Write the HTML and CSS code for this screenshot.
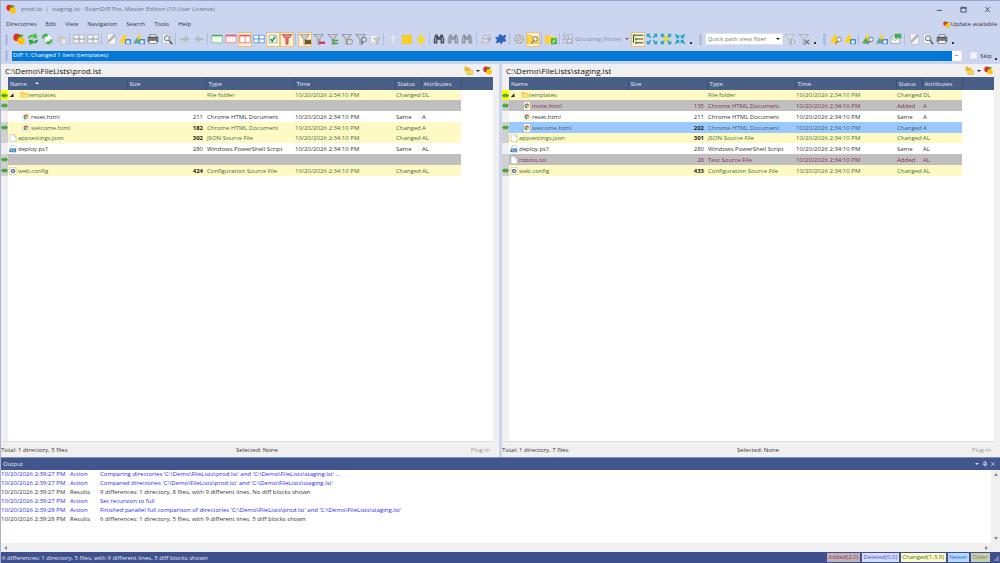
FILE: index.html
```
<!DOCTYPE html>
<html lang="en">
<head>
  <meta charset="UTF-8">
  <title>prod.lst | staging.lst - ExamDiff Pro</title>
  <link rel="stylesheet" href="styles.css">
</head>
<body>

<!-- Icon set, all on a 16x16 grid -->
<svg class="icon-defs" aria-hidden="true">
  <symbol id="apple" viewBox="0 0 16 16"><circle cx="5.5" cy="6" r="5" fill="#e8301a"/><circle cx="10.8" cy="10.2" r="5" fill="#ffc40c"/><path d="M6 5q4-5 8-2q-3 4-8 2" fill="#35a02c"/><path d="M3 1l2 2" stroke="#444"/></symbol>
  <symbol id="refresh" viewBox="0 0 16 16"><path d="M1 7q1-6 8-5l3-2 2 7H7l2-2q-3-1-5 2z" fill="#4cbe52"/><path d="M15 9q-1 6-8 5l-3 2-2-7h7l-2 2q3 1 5-2z" fill="#35a63f"/></symbol>
  <symbol id="recompare" viewBox="0 0 16 16"><path d="M5 2h6l4 4v8H5z" fill="#fff" stroke="#a6b4c4"/><path d="M1 7q0-5 5-6v-1l4 3-4 3V5Q3 5 4 8z" fill="#46b94c"/><path d="M15 9q0 5-5 6v1l-4-3 4-3v1q3 0 2-3z" fill="#46b94c"/></symbol>
  <symbol id="paste" viewBox="0 0 16 16"><path d="M2 2h5l1 2h5v8H2z" fill="#c9ccd4"/><path d="M8 7h5l2 2v6H8z" fill="#e9eaee" stroke="#b0b3bc"/></symbol>
  <symbol id="panes" viewBox="0 0 16 16"><path d="M1 2.500h14v11H1z" fill="#f3f4f8" stroke="#a4a7b0"/><path d="M8 3v10" stroke="#a4a7b0" stroke-width="1.500"/><path d="M1 8h14" stroke="#8a8d96" stroke-width="1.200"/></symbol>
  <symbol id="edit" viewBox="0 0 16 16"><path d="M3 1h9l2 2v12H3z" fill="#f6f7fa" stroke="#b9beca"/><path d="M4 13l1-4 7-7 2 2-7 7z" fill="#bbb" stroke="#8a8a8a" stroke-width=".6"/></symbol>
  <symbol id="tri-disk" viewBox="0 0 16 16"><path d="M0 13L7 1l7 12z" fill="#ffd21c"/><path d="M8 8h8v7H8z" fill="#4a8fd4"/><path d="M10 10h4v4h-4z" fill="#fff"/></symbol>
  <symbol id="tri-disk2" viewBox="0 0 16 16"><path d="M2 13L8 1l6 12z" fill="#ffd21c"/><path d="M0 14L5 6l5 8z" fill="#58a6a0"/><path d="M8 8h8v7H8z" fill="#4a8fd4"/><path d="M10 10h4v4h-4z" fill="#fff"/></symbol>
  <symbol id="tri-find" viewBox="0 0 16 16"><path d="M0 13L7 1l7 12z" fill="#ffd21c"/><circle cx="12" cy="8.500" r="3" fill="#e9f3ff" stroke="#888" stroke-width="1.200"/><path d="M10 11l-3 4" stroke="#b07020" stroke-width="1.600"/></symbol>
  <symbol id="tri-find2" viewBox="0 0 16 16"><path d="M1 13L8 1l6 12z" fill="#ffd21c"/><path d="M0 14L5 6l5 8z" fill="#58a66a"/><circle cx="12" cy="8.500" r="3" fill="#e9f3ff" stroke="#4a78b8" stroke-width="1.200"/><path d="M10 11l-3 4" stroke="#4a78b8" stroke-width="1.600"/></symbol>
  <symbol id="printer" viewBox="0 0 16 16"><path d="M4 2h8v4H4z" fill="#e5e7ec" stroke="#777"/><path d="M1 5h14v7H1z" fill="#5a5a5e"/><path d="M1 8h14" stroke="#a8a8ac"/><path d="M3 10h10v4H3z" fill="#f6f6f6" stroke="#777"/></symbol>
  <symbol id="preview" viewBox="0 0 16 16"><path d="M2 1h10v13H2z" fill="#f5f7fb" stroke="#b6bcc8"/><circle cx="8" cy="7" r="3.500" fill="#dcecff" stroke="#666" stroke-width="1.200"/><path d="M11 10l4 5" stroke="#555" stroke-width="1.800"/></symbol>
  <symbol id="right" viewBox="0 0 16 16"><path d="M2 6.500h6V3l6 5-6 5V9.500H2z" fill="#b5b8c2"/></symbol>
  <symbol id="left" viewBox="0 0 16 16"><path d="M14 6.500H8V3L2 8l6 5V9.500h6z" fill="#b5b8c2"/></symbol>
  <symbol id="pane-green" viewBox="0 0 16 16"><path d="M1 3h14v10H1z" fill="#f1fff1" stroke="#67bd7a"/><path d="M1 3.500h14" stroke="#45b060" stroke-width="2"/></symbol>
  <symbol id="pane-red" viewBox="0 0 16 16"><path d="M1 3h14v10H1z" fill="#fff4f2" stroke="#dd7772"/><path d="M1 3.500h14" stroke="#dd5b55" stroke-width="2"/></symbol>
  <symbol id="pane-split" viewBox="0 0 16 16"><path d="M1 3h14v10H1zM8 3v10" fill="#fff" stroke="#dd6660"/><path d="M1 3.500h14" stroke="#dd5b55" stroke-width="2"/></symbol>
  <symbol id="pane-blue" viewBox="0 0 16 16"><path d="M1 3h14v10H1z" fill="#fff" stroke="#4994dc"/><path d="M1 8h14M8 3v10" stroke="#4994dc" stroke-width="1.600"/></symbol>
  <symbol id="check" viewBox="0 0 16 16"><path d="M3 3h10v10H3z" fill="#fff" stroke="#7c98bc"/><path d="M5 8l2 3 4-6" fill="none" stroke="#159c2c" stroke-width="2"/></symbol>
  <symbol id="funnel" viewBox="0 0 16 16"><path d="M1 2h13L9 8v7H6.500V8z" fill="#b4b8be" stroke="#7d8188" stroke-width=".8"/><path d="M4 3.500h7M6 6h3" stroke="#eceef0"/></symbol>
  <symbol id="funnel-red" viewBox="0 0 16 16"><path d="M1 2h14L9.500 8v7h-3V8z" fill="#e0685c" stroke="#b34a44" stroke-width=".8"/><path d="M5 4h6" stroke="#ffd2c8"/></symbol>
  <symbol id="funnel-dir" viewBox="0 0 16 16"><use href="#funnel"/><path d="M8 9h8v6H8z" fill="#75591a"/></symbol>
  <symbol id="funnel-minus" viewBox="0 0 16 16"><use href="#funnel"/><path d="M8 13h8" stroke="#e12d3e" stroke-width="3"/></symbol>
  <symbol id="funnel-tree" viewBox="0 0 16 16"><use href="#funnel"/><path d="M9 8v6h6M9 10h6" stroke="#37a743" stroke-width="2" fill="none"/></symbol>
  <symbol id="funnel-clock" viewBox="0 0 16 16"><use href="#funnel"/><circle cx="12" cy="11.500" r="3.400" fill="#fff" stroke="#666"/><path d="M12 9.500v2h2" stroke="#666" fill="none"/></symbol>
  <symbol id="funnel-find" viewBox="0 0 16 16"><use href="#funnel"/><circle cx="12" cy="9" r="3" fill="#dcecff" stroke="#666" stroke-width="1.300"/><path d="M10 11v4" stroke="#666" stroke-width="1.400"/></symbol>
  <symbol id="funnel-page" viewBox="0 0 16 16"><path d="M2 3h9v10H2z" fill="#f0f0f3" stroke="#c4c5cc"/><path d="M6 7h9l-3 4v4h-2v-4z" fill="#c8c9d0" stroke="#a9abb4"/></symbol>
  <symbol id="funnel-off" viewBox="0 0 16 16"><path d="M1 2h13L9 8v7H6.500V8z" fill="#ced1da" stroke="#999ca5" stroke-width=".8"/><path d="M9 9l6 6M15 9l-6 6" stroke="#777" stroke-width="1.500"/></symbol>
  <symbol id="funnel-grey" viewBox="0 0 16 16"><path d="M1 2h13L9 8v7H6.500V8z" fill="#d9dbe1" stroke="#a4a7ae" stroke-width=".8"/><path d="M10 8l5 4-5 3z" fill="#eee" stroke="#999"/></symbol>
  <symbol id="up" viewBox="0 0 16 16"><path d="M8 2l5 6H9.500v6h-3V8H3z" fill="#e6e7e8" stroke="#d0d2d5" stroke-width=".6"/></symbol>
  <symbol id="square" viewBox="0 0 16 16"><path d="M2 3h12v11H2z" fill="#ffd31a" stroke="#f0c020"/></symbol>
  <symbol id="down" viewBox="0 0 16 16"><path d="M6 2h4v6h5l-7 7-7-7h5z" fill="#f6dc15"/></symbol>
  <symbol id="find" viewBox="0 0 16 16"><path d="M3 2h3l1 3h2l1-3h3l2 6v6h-5V9H6v5H1V8z" fill="currentColor"/><path d="M3.500 6v6M12.500 6v6" stroke="#cdd5e8"/></symbol>
  <symbol id="sheets" viewBox="0 0 16 16"><path d="M4 3h9l-2 4H2zM3 8h9l-2 5H1z" fill="#dddfe4" stroke="#aeb1b9"/><path d="M9 5l6 3-6 4z" fill="#aeb1b9"/></symbol>
  <symbol id="puzzle" viewBox="0 0 16 16"><path d="M5 3q2-3 4 0l2 1 2-2 2 2-2 3 2 3q-2 3-4 1l-1 2-2 2-2-3-3 2-2-2 2-3q-3-1-2-4l3 1z" fill="#2f65bb"/></symbol>
  <symbol id="gear" viewBox="0 0 16 16"><circle cx="8" cy="8" r="5.500" fill="#d6d8de" stroke="#a6a9b1" stroke-width="2" stroke-dasharray="3 1"/><circle cx="8" cy="8" r="2" fill="#fff" stroke="#999"/><path d="M5 11l6-6" stroke="#999"/></symbol>
  <symbol id="folder-find" viewBox="0 0 16 16"><path d="M0 3h6l1 2h8v9H0z" fill="#ffd548" stroke="#d9a619" stroke-width=".6"/><circle cx="11" cy="8" r="3" fill="#e4f1ff" stroke="#666"/><path d="M9 10l-3 4" stroke="#666" stroke-width="1.500"/></symbol>
  <symbol id="folder-sync" viewBox="0 0 16 16"><path d="M0 3h6l1 2h8v9H0z" fill="#ffd034"/><path d="M8 7h8v8H8z" fill="#3dad46"/><path d="M10 12q0-3 4-3M10 13q4 0 4-3" stroke="#d8ffd8" fill="none"/></symbol>
  <symbol id="group" viewBox="0 0 16 16"><path d="M2 2h12v12H2z" fill="none" stroke="#9a9eaa" stroke-dasharray="3 2"/><path d="M4 5h5v4H4zM7 8h6v5H7z" fill="#e2e4ea" stroke="#9a9eaa"/></symbol>
  <symbol id="tree" viewBox="0 0 16 16"><path d="M2 3v10M2 3h13M4 8h11M4 13h11" stroke="#3b4938" stroke-width="1.500"/><path d="M1 1.500h3v3H1zM4 6.500h3v3H4zM4 11.500h3v3H4z" fill="#4ea844"/></symbol>
  <symbol id="expand" viewBox="0 0 16 16"><path d="M1 1h5L4.500 3 7 5.500 5.500 7 3 4.500 1 6zM15 1h-5l1.500 2L9 5.500 10.500 7 13 4.500 15 6zM1 15h5l-1.500-2L7 10.500 5.500 9 3 11.500 1 10zM15 15h-5l1.500-2L9 10.500l1.500-1.500 2.500 2.500 2-1.500z" fill="#22a5c4"/></symbol>
  <symbol id="expand-diff" viewBox="0 0 16 16"><use href="#expand"/><path d="M8 2l2 4h4l-4 3v5l-2-3-2 3V9L2 6h4z" fill="#f2dc2e"/></symbol>
  <symbol id="collapse" viewBox="0 0 16 16"><path d="M7 7H2l1.500-2L1 2.500 2.500 1 5 3.500 7 2zM9 7h5l-1.500-2L15 2.500 13.500 1 11 3.500 9 2zM7 9H2l1.500 2L1 13.500 2.500 15 5 12.500 7 14zM9 9h5l-1.500 2 2.500 2.500-1.500 1.500-2.500-2.500L9 14z" fill="#22a5c4"/></symbol>
  <symbol id="mail" viewBox="0 0 16 16"><path d="M1 5h12v9H1z" fill="#f8f8f8" stroke="#989da8"/><path d="M1 6l6 4 6-4" stroke="#989da8" fill="none"/><path d="M6 1h9v7l-3-2-5 2z" fill="#3bb14a"/></symbol>
  <symbol id="folder" viewBox="0 0 16 16"><path d="M1 2h6l1 2h7v10H1z" fill="#ffc64a"/><path d="M1 6h14v8H1z" fill="#ffda7b"/></symbol>
  <symbol id="folders" viewBox="0 0 16 16"><path d="M1 1h4l1 2h5v6H1z" fill="#edb92a"/><path d="M5 7h5l1 1h4v7H5z" fill="#ffd85a" stroke="#c99720" stroke-width=".8"/></symbol>
  <symbol id="chrome" viewBox="0 0 16 16"><path d="M2 0h12v16H2z" fill="#fff" stroke="#aaa" stroke-width=".6"/><circle cx="8" cy="8" r="4.800" fill="#f5c431"/><path d="M8 8L4 5q4-4 8.500 1z" fill="#dc4437"/><path d="M8 8L4 5Q1.500 11 8 13z" fill="#27975a"/><circle cx="8" cy="8" r="2" fill="#3f7ddc" stroke="#fff"/></symbol>
  <symbol id="file" viewBox="0 0 16 16"><path d="M2 .500h8l4 4v11H2z" fill="#fff" stroke="#a0a0a0"/><path d="M10 .500v4h4" fill="none" stroke="#a0a0a0"/></symbol>
  <symbol id="script" viewBox="0 0 16 16"><path d="M4 .500h7l3 3v12H4z" fill="#fff" stroke="#a0a0a0"/><path d="M2 7h12v7H0z" fill="#3f8cbb"/><path d="M4 9l3 1.500L4 12M8 12h4" stroke="#fff" fill="none"/></symbol>
  <symbol id="config" viewBox="0 0 16 16"><path d="M2 .500h12v15H2z" fill="#fff" stroke="#a0a0a0"/><circle cx="8" cy="8" r="3" fill="none" stroke="#52657c" stroke-width="2.500"/></symbol>
  <symbol id="mark" viewBox="0 0 16 16"><path d="M0 8l6-6v3h4V2l6 6-6 6v-3H6v3z" fill="#3fa62c"/></symbol>
  <symbol id="expander" viewBox="0 0 16 16"><path d="M12 3v10H2z" fill="#222"/></symbol>
</svg>

<header class="titlebar">
  <svg class="icon"><use href="#apple"/></svg>
  <h1>prod.lst&nbsp; |&nbsp; staging.lst - ExamDiff Pro, Master Edition (10-User License)</h1>
  <div class="window-buttons">
    <button aria-label="Minimize"><svg viewBox="0 0 16 16"><path d="M2 10h12"/></svg></button>
    <button aria-label="Maximize"><svg viewBox="0 0 16 16"><path d="M2 3h12v11H2zM2 5h12"/></svg></button>
    <button aria-label="Close"><svg viewBox="0 0 16 16"><path d="M3 2l10 12M13 2L3 14"/></svg></button>
  </div>
</header>

<nav class="menu">
  <button>Directories</button>
  <button>Edit</button>
  <button>View</button>
  <button>Navigation</button>
  <button>Search</button>
  <button>Tools</button>
  <button>Help</button>
  <a class="update" href="#"><svg class="icon small"><use href="#apple"/></svg>Update available</a>
</nav>

<div class="toolbars">
  <div class="toolbar main">
    <span class="grip"></span>
    <button aria-label="Compare"><svg class="icon"><use href="#apple"/></svg></button>
    <button aria-label="Refresh"><svg class="icon"><use href="#refresh"/></svg></button>
    <button aria-label="Recompare"><svg class="icon"><use href="#recompare"/></svg></button>
    <button aria-label="Paste"><svg class="icon"><use href="#paste"/></svg></button>
    <span class="sep"></span>
    <button aria-label="Next pane"><svg class="icon"><use href="#panes"/></svg></button>
    <button aria-label="Previous pane"><svg class="icon"><use href="#panes"/></svg></button>
    <span class="sep"></span>
    <button aria-label="Edit"><svg class="icon"><use href="#edit"/></svg></button>
    <button aria-label="Save diff"><svg class="icon"><use href="#tri-disk"/></svg></button>
    <button aria-label="Save report"><svg class="icon"><use href="#tri-disk2"/></svg></button>
    <button aria-label="Print"><svg class="icon"><use href="#printer"/></svg></button>
    <button aria-label="Preview"><svg class="icon"><use href="#preview"/></svg></button>
    <span class="sep"></span>
    <button aria-label="Copy right"><svg class="icon"><use href="#right"/></svg></button>
    <button aria-label="Copy left"><svg class="icon"><use href="#left"/></svg></button>
    <span class="sep"></span>
    <button aria-label="Show added"><svg class="icon"><use href="#pane-green"/></svg></button>
    <button aria-label="Show deleted"><svg class="icon"><use href="#pane-red"/></svg></button>
    <button class="on" aria-label="Split"><svg class="icon"><use href="#pane-split"/></svg></button>
    <button aria-label="Show all"><svg class="icon"><use href="#pane-blue"/></svg></button>
    <button class="on" aria-label="Check"><svg class="icon"><use href="#check"/></svg></button>
    <button class="on" aria-label="Filter"><svg class="icon"><use href="#funnel-red"/></svg></button>
    <span class="sep"></span>
    <button class="on" aria-label="Filter directories"><svg class="icon"><use href="#funnel-dir"/></svg></button>
    <button aria-label="Exclude"><svg class="icon"><use href="#funnel-minus"/></svg></button>
    <button aria-label="Filter tree"><svg class="icon"><use href="#funnel-tree"/></svg></button>
    <button aria-label="Filter by time"><svg class="icon"><use href="#funnel-clock"/></svg></button>
    <button aria-label="Filter by text"><svg class="icon"><use href="#funnel-find"/></svg></button>
    <button aria-label="Filter file"><svg class="icon"><use href="#funnel-page"/></svg></button>
    <span class="sep"></span>
    <button aria-label="Previous difference"><svg class="icon"><use href="#up"/></svg></button>
    <button aria-label="Current difference"><svg class="icon"><use href="#square"/></svg></button>
    <button aria-label="Next difference"><svg class="icon"><use href="#down"/></svg></button>
    <span class="sep"></span>
    <button class="find" aria-label="Find"><svg class="icon"><use href="#find"/></svg></button>
    <button class="find dim" aria-label="Find next"><svg class="icon"><use href="#find"/></svg></button>
    <button class="find dim" aria-label="Find previous"><svg class="icon"><use href="#find"/></svg></button>
    <span class="sep wide"></span>
    <button aria-label="Synchronize"><svg class="icon"><use href="#sheets"/></svg></button>
    <button aria-label="Plug-ins"><svg class="icon"><use href="#puzzle"/></svg></button>
    <span class="sep"></span>
    <button aria-label="Options"><svg class="icon"><use href="#gear"/></svg></button>
    <button class="on" aria-label="Browse"><svg class="icon"><use href="#folder-find"/></svg></button>
    <span class="sep"></span>
    <button aria-label="Recursive"><svg class="icon"><use href="#folder-sync"/></svg></button>
    <span class="sep"></span>
    <button class="grouping"><svg class="icon"><use href="#group"/></svg>Grouping (None)<i class="arrow"></i></button>
    <button class="on" aria-label="Tree view"><svg class="icon"><use href="#tree"/></svg></button>
    <button aria-label="Expand all"><svg class="icon"><use href="#expand"/></svg></button>
    <button aria-label="Expand differences"><svg class="icon"><use href="#expand-diff"/></svg></button>
    <button aria-label="Collapse all"><svg class="icon"><use href="#collapse"/></svg></button>
    <span class="more"></span>
  </div>
  <div class="toolbar">
    <span class="grip"></span>
    <div class="quick-filter">
      <input type="text" aria-label="Quick path view filter" placeholder="Quick path view filter">
      <button aria-label="Filter history"><i class="arrow"></i></button>
    </div>
    <button aria-label="Apply filter"><svg class="icon"><use href="#funnel-grey"/></svg></button>
    <button aria-label="Clear filter"><svg class="icon"><use href="#funnel-off"/></svg></button>
    <span class="more"></span>
  </div>
  <div class="toolbar">
    <span class="grip"></span>
    <button aria-label="View diff"><svg class="icon"><use href="#tri-find"/></svg></button>
    <button aria-label="Save diff file"><svg class="icon"><use href="#tri-disk"/></svg></button>
    <span class="sep"></span>
    <button aria-label="View report"><svg class="icon"><use href="#tri-find2"/></svg></button>
    <button aria-label="Save report file"><svg class="icon"><use href="#tri-disk2"/></svg></button>
    <button aria-label="Mail report"><svg class="icon"><use href="#mail"/></svg></button>
    <span class="sep"></span>
    <button aria-label="Page setup"><svg class="icon"><use href="#edit"/></svg></button>
    <button aria-label="Print preview"><svg class="icon"><use href="#preview"/></svg></button>
    <button aria-label="Print report"><svg class="icon"><use href="#printer"/></svg></button>
    <span class="more"></span>
  </div>
</div>

<div class="diffbar">
  <span class="grip"></span>
  <div class="diff-select">
    <select aria-label="Current difference">
      <option>Diff 1: Changed 1 item (templates)</option>
    </select>
    <span class="drop"></span>
  </div>
  <label class="skip"><input type="checkbox">Skip</label>
  <span class="more"></span>
</div>

<main class="panes">
  <section class="pane">
    <div class="path">
      <h2>C:\Demo\FileLists\prod.lst</h2>
      <button aria-label="Open first"><svg class="icon small"><use href="#folders"/></svg></button>
      <button aria-label="Recent first"><i class="arrow"></i></button>
      <button aria-label="Compare first"><svg class="icon small"><use href="#apple"/></svg></button>
    </div>
    <div class="list">
      <table>
        <colgroup><col class="c-mark"><col class="c-name"><col class="c-size"><col class="c-type"><col class="c-time"><col class="c-status"><col class="c-attr"><col></colgroup>
        <thead>
          <tr><th class="mark"></th><th>Name<i class="sort"></i></th><th>Size</th><th>Type</th><th>Time</th><th>Status</th><th>Attributes</th><th></th></tr>
        </thead>
        <tbody>
          <tr class="changed"><td class="mark current"><svg><use href="#mark"/></svg></td><td class="dir"><svg><use href="#expander"/></svg><svg class="folder"><use href="#folder"/></svg>templates</td><td></td><td>File folder</td><td>10/20/2026 2:34:10 PM</td><td>Changed</td><td>DL</td><td></td></tr>
          <tr class="missing"><td class="mark"><svg><use href="#mark"/></svg></td><td></td><td></td><td></td><td></td><td></td><td></td><td></td></tr>
          <tr><td class="mark"></td><td class="child"><svg><use href="#chrome"/></svg>reset.html</td><td>211</td><td>Chrome HTML Document</td><td>10/20/2026 2:34:10 PM</td><td>Same</td><td>A</td><td></td></tr>
          <tr class="changed"><td class="mark"><svg><use href="#mark"/></svg></td><td class="child"><svg><use href="#chrome"/></svg>welcome.html</td><td>182</td><td>Chrome HTML Document</td><td>10/20/2026 2:34:10 PM</td><td>Changed</td><td>A</td><td></td></tr>
          <tr class="changed"><td class="mark"></td><td><svg><use href="#file"/></svg>appsettings.json</td><td>302</td><td>JSON Source File</td><td>10/20/2026 2:34:10 PM</td><td>Changed</td><td>AL</td><td></td></tr>
          <tr><td class="mark"></td><td><svg><use href="#script"/></svg>deploy.ps1</td><td>280</td><td>Windows PowerShell Script</td><td>10/20/2026 2:34:10 PM</td><td>Same</td><td>AL</td><td></td></tr>
          <tr class="missing"><td class="mark"><svg><use href="#mark"/></svg></td><td></td><td></td><td></td><td></td><td></td><td></td><td></td></tr>
          <tr class="changed"><td class="mark"><svg><use href="#mark"/></svg></td><td><svg><use href="#config"/></svg>web.config</td><td>424</td><td>Configuration Source File</td><td>10/20/2026 2:34:10 PM</td><td>Changed</td><td>AL</td><td></td></tr>
        </tbody>
      </table>
    </div>
    <div class="pane-status"><span>Total: 1 directory, 5 files</span><span>Selected: None</span><span class="plugin">Plug-in</span></div>
  </section>

  <section class="pane">
    <div class="path">
      <h2>C:\Demo\FileLists\staging.lst</h2>
      <button aria-label="Open second"><svg class="icon small"><use href="#folders"/></svg></button>
      <button aria-label="Recent second"><i class="arrow"></i></button>
      <button aria-label="Compare second"><svg class="icon small"><use href="#apple"/></svg></button>
    </div>
    <div class="list">
      <table>
        <colgroup><col class="c-mark"><col class="c-name"><col class="c-size"><col class="c-type"><col class="c-time"><col class="c-status"><col class="c-attr"><col></colgroup>
        <thead>
          <tr><th class="mark"></th><th>Name</th><th>Size</th><th>Type</th><th>Time</th><th>Status</th><th>Attributes</th><th></th></tr>
        </thead>
        <tbody>
          <tr class="changed"><td class="mark current"><svg><use href="#mark"/></svg></td><td class="dir"><svg><use href="#expander"/></svg><svg class="folder"><use href="#folder"/></svg>templates</td><td></td><td>File folder</td><td>10/20/2026 2:34:10 PM</td><td>Changed</td><td>DL</td><td></td></tr>
          <tr class="added"><td class="mark"><svg><use href="#mark"/></svg></td><td class="child"><svg><use href="#chrome"/></svg>invite.html</td><td>135</td><td>Chrome HTML Document</td><td>10/20/2026 2:34:10 PM</td><td>Added</td><td>A</td><td></td></tr>
          <tr><td class="mark"></td><td class="child"><svg><use href="#chrome"/></svg>reset.html</td><td>211</td><td>Chrome HTML Document</td><td>10/20/2026 2:34:10 PM</td><td>Same</td><td>A</td><td></td></tr>
          <tr class="changed selected"><td class="mark"><svg><use href="#mark"/></svg></td><td class="child"><svg><use href="#chrome"/></svg>welcome.html</td><td>202</td><td>Chrome HTML Document</td><td>10/20/2026 2:34:10 PM</td><td>Changed</td><td>A</td><td></td></tr>
          <tr class="changed"><td class="mark"></td><td><svg><use href="#file"/></svg>appsettings.json</td><td>301</td><td>JSON Source File</td><td>10/20/2026 2:34:10 PM</td><td>Changed</td><td>AL</td><td></td></tr>
          <tr><td class="mark"></td><td><svg><use href="#script"/></svg>deploy.ps1</td><td>280</td><td>Windows PowerShell Script</td><td>10/20/2026 2:34:10 PM</td><td>Same</td><td>AL</td><td></td></tr>
          <tr class="added"><td class="mark"></td><td><svg><use href="#file"/></svg>robots.txt</td><td>28</td><td>Text Source File</td><td>10/20/2026 2:34:10 PM</td><td>Added</td><td>AL</td><td></td></tr>
          <tr class="changed"><td class="mark"><svg><use href="#mark"/></svg></td><td><svg><use href="#config"/></svg>web.config</td><td>433</td><td>Configuration Source File</td><td>10/20/2026 2:34:10 PM</td><td>Changed</td><td>AL</td><td></td></tr>
        </tbody>
      </table>
    </div>
    <div class="pane-status"><span>Total: 1 directory, 7 files</span><span>Selected: None</span><span class="plugin">Plug-in</span></div>
  </section>
</main>

<section class="output">
  <div class="output-title">
    <h2>Output</h2>
    <button aria-label="Output menu"><i class="arrow"></i></button>
    <button aria-label="Pin"><svg viewBox="0 0 16 16"><path d="M5 2h6v8H5zM9 2v8M2 10h12M8 10v5"/></svg></button>
    <button aria-label="Close output"><svg viewBox="0 0 16 16"><path d="M3 3l10 10M13 3L3 13"/></svg></button>
  </div>
  <div class="output-body">
    <ul class="log">
      <li class="action"><span>10/20/2026 2:39:27 PM</span><span>Action</span><span>Comparing directories 'C:\Demo\FileLists\prod.lst' and 'C:\Demo\FileLists\staging.lst' ...</span></li>
      <li class="action"><span>10/20/2026 2:39:27 PM</span><span>Action</span><span>Compared directories 'C:\Demo\FileLists\prod.lst' and 'C:\Demo\FileLists\staging.lst'</span></li>
      <li><span>10/20/2026 2:39:27 PM</span><span>Results</span><span>9 differences: 1 directory, 8 files, with 9 different lines. No diff blocks shown</span></li>
      <li class="action"><span>10/20/2026 2:39:27 PM</span><span>Action</span><span>Set recursion to full</span></li>
      <li class="action"><span>10/20/2026 2:39:28 PM</span><span>Action</span><span>Finished parallel full comparison of directories 'C:\Demo\FileLists\prod.lst' and 'C:\Demo\FileLists\staging.lst'</span></li>
      <li><span>10/20/2026 2:39:28 PM</span><span>Results</span><span>6 differences: 1 directory, 5 files, with 9 different lines. 5 diff blocks shown</span></li>
    </ul>
    <div class="vscroll"><i class="tri up"></i><i class="tri down"></i></div>
    <div class="hscroll"><i class="tri left"></i><i class="tri right"></i></div>
  </div>
</section>

<footer class="statusbar">
  <span class="message">6 differences: 1 directory, 5 files, with 9 different lines, 5 diff blocks shown</span>
  <span class="badge b-added">Added(2,0)</span>
  <span class="badge b-deleted">Deleted(0,0)</span>
  <span class="badge b-changed">Changed(1,3,9)</span>
  <span class="badge b-newer">Newer</span>
  <span class="badge b-older">Older</span>
  <svg class="resize" viewBox="0 0 16 16"><path d="M14 3v11H3z" fill="#7c88b8"/></svg>
</footer>

</body>
</html>
```
FILE: styles.css
```
* {
  box-sizing: border-box;
}
body {
  margin: 0;
  height: 100vh;
  display: flex;
  flex-direction: column;
  overflow: hidden;
  background: #ccd5f0;
  border-top: 1px solid #9aa6d0;
  border-left: 1px solid #a8b2d4;
  color: #333;
  font-family: "Open Sans", "Noto Sans", sans-serif;
  font-size: 6px;
  line-height: 10px;
  white-space: nowrap;
}
h1, h2 {
  margin: 0;
  font-size: 6px;
  font-weight: normal;
}
button, input, select {
  font: inherit;
  color: inherit;
  margin: 0;
  padding: 0;
  border: 0;
  border-radius: 0;
  background: none;
}
button {
  display: flex;
  align-items: center;
  justify-content: center;
}
.icon-defs {
  position: absolute;
  width: 0;
  height: 0;
}
.icon {
  width: 12px;
  height: 12px;
  flex: none;
}
.icon.small {
  width: 9px;
  height: 9px;
}
.arrow {
  border: 2px solid transparent;
  border-top-color: #222;
  border-bottom: 0;
}

/* title and menu */
.titlebar {
  display: flex;
  align-items: center;
  height: 16px;
  padding: 0 1px 0 5px;
}
.titlebar .icon {
  width: 10px;
  height: 10px;
}
.titlebar h1 {
  flex: 1;
  padding-left: 5px;
  color: #66708f;
}
.window-buttons {
  display: flex;
}
.window-buttons button {
  width: 24px;
}
.window-buttons svg {
  width: 7px;
  height: 7px;
  fill: none;
  stroke: #39435f;
  stroke-width: 2;
}
.menu {
  display: flex;
  align-items: center;
  height: 14px;
  padding: 0 3px 0 5px;
  gap: 9px;
}
.update {
  display: flex;
  align-items: center;
  margin-left: auto;
  color: #333;
  text-decoration: none;
}
.update .icon {
  width: 7px;
  height: 7px;
}

/* toolbars */
.toolbars {
  display: flex;
  align-items: center;
  height: 16px;
  padding-left: 4px;
  gap: 5px;
}
.toolbar {
  display: flex;
  align-items: center;
}
.toolbar button {
  width: 14px;
  height: 15px;
  flex: none;
}
.toolbar button.on {
  background: #fff0cf;
  border: 1px solid #e3c28a;
}
.grip {
  width: 3px;
  height: 11px;
  margin-right: 4px;
  background: repeating-conic-gradient(#98a4c8 0 25%, #ccd5f0 0 50%) 0 0 / 2px 2px;
}
.toolbar .grip {
  margin-right: 3px;
}
.toolbar.main .grip {
  margin-right: 4px;
}
.sep {
  width: 1px;
  height: 12px;
  margin: 0 2px 0 1px;
  background: #b2bddd;
}
.sep.wide {
  margin: 0 3px 0 2px;
}
.more {
  width: 2px;
  height: 2px;
  margin: 7px 2px 0 3px;
  background: #333;
}
.find {
  color: #4b5058;
}
.find.dim {
  color: #8f959f;
}
.toolbar .grouping {
  width: auto;
  gap: 1px;
  padding: 0 2px 0 0;
  color: #8b8f9c;
}
.grouping .arrow {
  margin-left: 2px;
  border-top-color: #666;
}
.quick-filter {
  display: flex;
  width: 78px;
  height: 12px;
  background: #fff;
  border: 1px solid #dde2f1;
}
.quick-filter input {
  flex: 1;
  min-width: 0;
  padding-left: 2px;
}
.quick-filter input::placeholder {
  color: #777;
}
.toolbar .quick-filter button {
  width: 7px;
  height: 10px;
}
.diffbar {
  display: flex;
  align-items: center;
  height: 17px;
  padding: 0 1px 0 4px;
}
.diff-select {
  display: flex;
  flex: 1;
  height: 10px;
  background: #fff;
  border: 1px solid #e4e8f4;
  border-width: 0 1px 0 0;
}
.diff-select select {
  appearance: none;
  flex: 1;
  padding-left: 1px;
  background: #0078d7;
  color: #fff;
  line-height: 9px;
}
.drop {
  width: 9px;
  background: linear-gradient(#999, #999) center / 3px 1px no-repeat;
}
.skip {
  display: flex;
  align-items: center;
  gap: 3px;
  padding-left: 8px;
}
.skip input {
  appearance: none;
  width: 7px;
  height: 7px;
  background: #f3f5fc;
  border: 1px solid #e4e8f5;
}

/* file panes */
.panes {
  flex: 1;
  min-height: 0;
  display: grid;
  grid-template-columns: 1fr 1fr;
  gap: 3px;
}
.pane {
  display: flex;
  flex-direction: column;
  background: #f0f0f0;
}
.path {
  display: flex;
  align-items: center;
  height: 13px;
  padding: 0 7px 0 4px;
}
.path h2 {
  flex: 1;
  font-size: 8px;
  color: #111;
}
.path button {
  min-width: 8px;
  margin-left: 1px;
}
.list {
  flex: 1;
  min-height: 0;
  margin-right: 6px;
  background: linear-gradient(90deg, #f0f0f0 7px, #fff 7px);
  border-bottom: 1px solid #ddd;
}
table {
  width: 100%;
  table-layout: fixed;
  border-collapse: collapse;
}
.c-mark { width: 7px; }
.c-name { width: 119px; }
.c-size { width: 79px; }
.c-type { width: 88px; }
.c-time { width: 101px; }
.c-status { width: 26px; }
.c-attr { width: 40px; }
th {
  height: 13px;
  padding: 0 0 0 2px;
  background: #4a5f88;
  color: #e6ebf5;
  font-weight: normal;
  text-align: left;
  border-right: 1px solid #3d5077;
}
th.mark {
  background: #f0f0f0;
  border: 0;
}
th:last-child {
  border: 0;
}
.sort {
  display: inline-block;
  margin: 0 0 2px 8px;
  border: 2px solid transparent;
  border-bottom-color: #e6ebf5;
  border-top: 0;
}
td {
  height: 11px;
  padding: 0 0 0 1px;
  overflow: hidden;
}
tbody tr:nth-child(4n+1) td {
  height: 10px;
}
td:nth-child(3) {
  padding-right: 3px;
  text-align: right;
}
td svg {
  width: 8px;
  height: 8px;
  margin-right: 1px;
  vertical-align: -2px;
}
td.dir svg {
  width: 6px;
  height: 6px;
  vertical-align: -1px;
}
td.dir svg.folder {
  width: 8px;
  height: 8px;
  margin: 0 0 0 4px;
  vertical-align: -2px;
}
td.child {
  padding-left: 14px;
}
.changed td {
  background: #fff9c4;
  color: #43713d;
}
.changed td:nth-child(3) {
  color: #222;
  font-weight: bold;
}
.missing td, .added td {
  background: #bfbfbf;
}
.added td {
  color: #8e2f58;
}
.selected td {
  background: #99c9ff;
  color: #456070;
}
tr td.mark {
  padding: 0;
  background: #f0f0f0;
  line-height: 0;
}
tr.changed td.mark, tr.missing td.mark, tr.added td.mark {
  background: #d0d0d0;
}
tr.changed td.mark.current {
  background: #ff0;
}
td.mark svg {
  width: 7px;
  height: 7px;
  margin: 0;
  vertical-align: middle;
}
tbody tr td:last-child {
  background: #fff;
}
.pane-status {
  display: grid;
  grid-template-columns: 235px 1fr auto;
  height: 15px;
  padding: 0 9px 0 0;
  line-height: 16px;
}
.plugin {
  color: #999;
}

/* output panel */
.output-title {
  display: flex;
  align-items: center;
  height: 13px;
  padding: 0 4px 0 2px;
  gap: 1px;
  background: #40568d;
  color: #e6ebf5;
  border-top: 1px solid #8492ba;
}
.output-title h2 {
  flex: 1;
}
.output-title button {
  width: 7px;
}
.output-title .arrow {
  border-top-color: #d5dbea;
}
.output-title svg {
  width: 6px;
  height: 6px;
  fill: none;
  stroke: #c8d0e5;
  stroke-width: 2;
}
.output-body {
  display: grid;
  grid-template-columns: 1fr 9px;
  grid-template-rows: 73px 9px;
  background: #f0f0f0;
}
.log {
  margin: 0;
  padding: 0;
  list-style: none;
  background: #fff;
  overflow: hidden;
  line-height: 9px;
}
.log li {
  display: grid;
  grid-template-columns: 69px 30px 1fr;
  height: 9px;
}
.log .action {
  color: #2a2af0;
}
.vscroll, .hscroll {
  display: flex;
  align-items: center;
  justify-content: space-between;
}
.vscroll {
  flex-direction: column;
  padding: 3px 0;
}
.hscroll {
  padding: 0 3px;
}
.tri {
  border: 2px solid transparent;
}
.tri.up { border-bottom: 3px solid #888; border-top: 0; }
.tri.down { border-top: 3px solid #888; border-bottom: 0; }
.tri.left { border-right: 3px solid #888; border-left: 0; }
.tri.right { border-left: 3px solid #888; border-right: 0; }

.statusbar {
  display: flex;
  align-items: center;
  height: 11px;
  padding-left: 1px;
  gap: 2px;
  background: #40508d;
  color: #e3e8f5;
}
.message {
  flex: 1;
}
.badge {
  height: 9px;
  padding: 0 2px 0 1px;
  line-height: 9px;
}
.b-added { background: #bfb4bb; color: #a03848; }
.b-deleted { background: #d9dcf6; color: #4a50d8; }
.b-changed { background: #fffbc9; color: #43713d; }
.b-newer { background: #b4dcff; color: #4565d8; }
.b-older { background: #c8d0b4; color: #8f7a35; }
.resize {
  width: 8px;
  height: 8px;
}
```
